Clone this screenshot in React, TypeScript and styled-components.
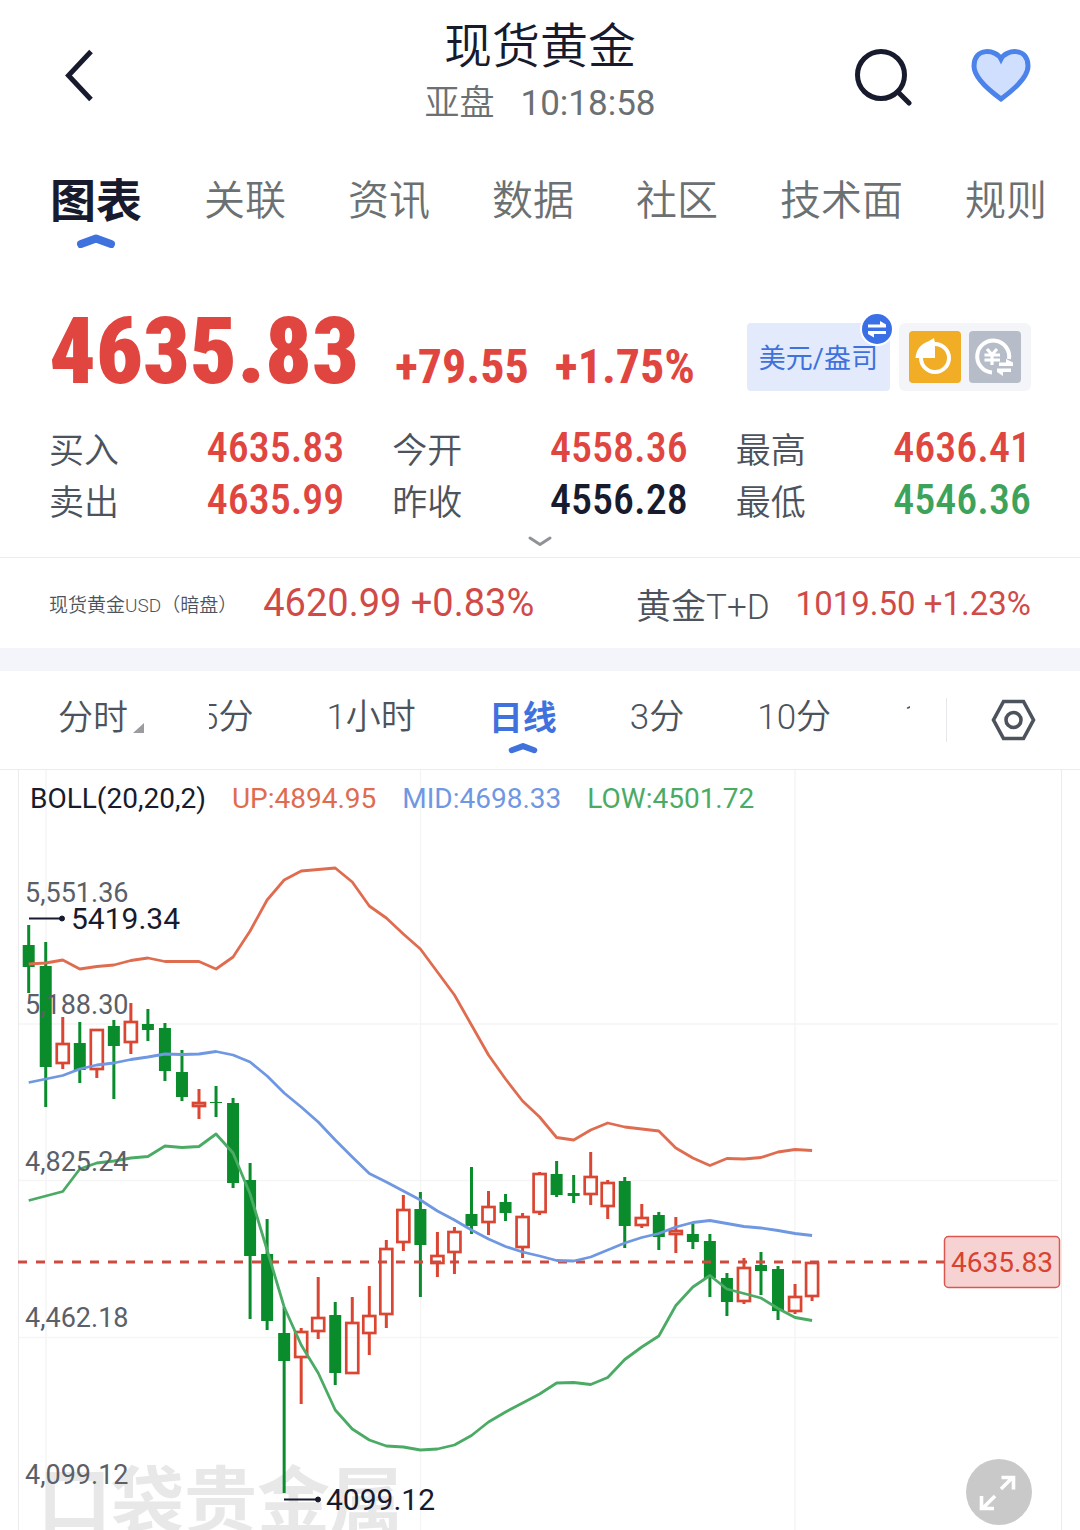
import React from "react";
import styled, { createGlobalStyle } from "styled-components";

const ink = "#171b2d";
const slate = "#4d535d";
const grey = "#6b7073";
const red = "#e0463f";
const green = "#3da35b";
const blue = "#3f72dd";

const uiFont = `Roboto, "Noto Sans CJK SC", sans-serif`;
const numFont = `"Roboto Condensed", Roboto, "Noto Sans CJK SC", sans-serif`;

const GlobalStyle = createGlobalStyle`
  * { box-sizing: border-box; }
  body { margin: 0; background: #fff; font-family: ${uiFont}; color: ${ink}; }
  button { border: 0; padding: 0; margin: 0; background: none; font: inherit; color: inherit; cursor: pointer; }
  dl, dd, dt, h1, p { margin: 0; font-weight: inherit; }
  svg { display: block; }
`;

const Page = styled.main`
  background: #fff;
  overflow: hidden;
`;

const Header = styled.header`
  display: grid;
  grid-template-columns: 1fr auto 1fr;
  padding: 15px 48px 22px;
`;

const HeaderSide = styled.div<{ $end?: boolean }>`
  display: flex;
  align-items: center;
  justify-content: ${(p) => (p.$end ? "flex-end" : "flex-start")};
  gap: 56px;
  padding-top: 8px;
`;

const IconButton = styled.button`
  display: flex;
  align-items: center;
  justify-content: center;
`;

const TitleBlock = styled.div`
  text-align: center;
`;

const Title = styled.h1`
  font-size: 48px;
  line-height: 64px;
  font-weight: 350;
`;

const Session = styled.p`
  display: flex;
  justify-content: center;
  gap: 26px;
  font-size: 35px;
  line-height: 50px;
  font-weight: 350;
  color: ${grey};
  time { font-weight: 400; }
`;

const Tabs = styled.nav`
  display: flex;
  gap: 62px;
  padding: 18px 0 0 50px;
`;

const Tab = styled.button<{ $active?: boolean }>`
  display: flex;
  flex-direction: column;
  align-items: center;
  flex: none;
  height: 85px;
  font-size: ${(p) => (p.$active ? 46 : 41)}px;
  line-height: 64px;
  font-weight: ${(p) => (p.$active ? 700 : 350)};
  color: ${(p) => (p.$active ? ink : grey)};
`;

const Quote = styled.section`
  padding: 53px 49px 0;
`;

const PriceRow = styled.div`
  display: flex;
  align-items: center;
  color: ${red};
  font-family: ${numFont};
  font-weight: 700;
`;

const Figures = styled.div`
  display: flex;
  align-items: baseline;
  flex: 1;
  padding-bottom: 10px;
`;

const LastPrice = styled.strong`
  font-size: 92px;
  line-height: 90px;
  width: 346px;
`;

const Change = styled.span`
  font-size: 48px;
  line-height: 60px;
  margin-right: 26px;
`;

const UnitButton = styled.button`
  position: relative;
  height: 68px;
  padding: 4px 12px 0;
  border-radius: 4px;
  background: #e3eafb;
  color: ${blue};
  font: 400 27px/64px ${uiFont};
  margin-right: 9px;
`;

const SwapBadge = styled.span`
  position: absolute;
  top: -11px;
  right: -4px;
  border: 2px solid #fff;
  border-radius: 50%;
`;

const ToolGroup = styled.div`
  display: flex;
  gap: 8px;
  padding: 8px 10px;
  border-radius: 6px;
  background: #f4f5f8;
`;

const Stats = styled.dl`
  display: grid;
  grid-template-columns: repeat(3, 1fr);
  column-gap: 48px;
  padding-top: 17px;
`;

const Stat = styled.div`
  display: flex;
  justify-content: space-between;
  align-items: center;
  height: 52px;
`;

const StatLabel = styled.dt`
  padding-top: 3px;
  font-size: 35px;
  line-height: 48px;
  font-weight: 350;
  color: ${slate};
`;

const StatValue = styled.dd<{ $color: string }>`
  padding-bottom: 4px;
  font: 500 42px/48px ${numFont};
  color: ${(p) => p.$color};
`;

const MoreButton = styled.button`
  display: flex;
  margin: 0 auto;
  padding: 8px 12px 10px;
`;

const Related = styled.section`
  display: flex;
  justify-content: space-between;
  align-items: center;
  padding: 0 49px;
  height: 91px;
  border-top: 1px solid #ececee;
  color: ${slate};
  font-weight: 350;
`;

const RelatedItem = styled.a`
  display: flex;
  align-items: center;
  color: inherit;
  text-decoration: none;
  gap: 26px;
`;

const RelatedName = styled.span<{ $small?: boolean }>`
  font-size: ${(p) => (p.$small ? 19 : 35)}px;
`;

const RelatedValue = styled.span<{ $small?: boolean }>`
  font-size: ${(p) => (p.$small ? 33 : 38)}px;
  font-weight: 400;
  color: #d04b47;
`;

const Band = styled.div`
  height: 23px;
  background: #f3f5fa;
`;

const PeriodBar = styled.nav`
  display: flex;
  align-items: center;
  height: 98px;
  padding: 0 44px 0 58px;
  font-size: 35px;
  line-height: 48px;
  font-weight: 350;
  color: ${slate};
`;

const PeriodMenu = styled.button`
  display: flex;
  align-items: flex-end;
  gap: 5px;
  width: 151px;
  flex: none;
  padding-bottom: 3px;
  svg { margin-bottom: 10px; }
`;

const PeriodScroller = styled.div`
  flex: 1;
  overflow: hidden;
`;

const PeriodTrack = styled.div`
  display: flex;
  gap: 73px;
  margin-left: -10px;
`;

const Period = styled.button<{ $active?: boolean }>`
  display: flex;
  flex-direction: column;
  align-items: center;
  flex: none;
  height: 76px;
  padding-top: 12px;
  font-size: ${(p) => (p.$active ? 34 : 35)}px;
  font-weight: ${(p) => (p.$active ? 700 : 350)};
  color: ${(p) => (p.$active ? blue : slate)};
`;

const SettingsButton = styled(IconButton)`
  height: 44px;
  margin-left: 36px;
  padding-left: 44px;
  border-left: 1px solid #e6e7ea;
`;

const ChartPanel = styled.section`
  position: relative;
  border-top: 1px solid #ececee;
`;

const Legend = styled.div`
  position: absolute;
  top: 9px;
  left: 30px;
  display: flex;
  gap: 26px;
  font-size: 28px;
  line-height: 40px;
`;

const LegendItem = styled.span<{ $color: string }>`
  color: ${(p) => p.$color};
`;

const ExpandButton = styled.button`
  position: absolute;
  right: 48px;
  bottom: 5px;
`;

const ChartSvg = styled.svg`
  width: 100%;
  height: auto;
  font-family: ${uiFont};
`;

const ActiveMark = ({ width }: { width: number }) => (
  <svg width={width} height={width * 0.4} viewBox="0 0 40 16" aria-hidden="true">
    <path d="M5 11 20 5.5 35 11" fill="none" stroke={blue} strokeWidth="8" strokeLinecap="round" strokeLinejoin="round" />
  </svg>
);

/* open/close band, wick extent, and direction, one entry per trading day */
type Candle = [number, number, number, number, "u" | "d"];
const candles: Candle[] = [
  [945, 967, 925, 993, "d"], [966, 1067, 942, 1107, "d"], [1043, 1064, 1017, 1069, "u"],
  [1043, 1070, 1022, 1083, "d"], [1029, 1070, 1029, 1078, "u"], [1026, 1046, 1020, 1099, "d"],
  [1021, 1043, 1003, 1054, "u"], [1024, 1030, 1009, 1041, "d"], [1028, 1071, 1023, 1081, "d"],
  [1072, 1097, 1050, 1101, "d"], [1102, 1107, 1089, 1119, "u"], [1102, 1103, 1086, 1117, "d"],
  [1103, 1183, 1098, 1188, "d"], [1180, 1256, 1163, 1319, "d"], [1254, 1321, 1219, 1330, "d"],
  [1333, 1361, 1307, 1493, "d"], [1331, 1358, 1328, 1404, "u"], [1317, 1332, 1277, 1339, "u"],
  [1315, 1373, 1302, 1385, "d"], [1322, 1374, 1297, 1374, "u"], [1315, 1334, 1286, 1355, "u"],
  [1248, 1315, 1240, 1328, "u"], [1209, 1243, 1195, 1251, "u"], [1209, 1245, 1192, 1297, "d"],
  [1255, 1264, 1232, 1277, "u"], [1231, 1253, 1227, 1274, "u"], [1214, 1226, 1167, 1234, "d"],
  [1206, 1223, 1191, 1235, "u"], [1202, 1213, 1194, 1221, "d"], [1216, 1248, 1213, 1258, "u"],
  [1173, 1213, 1172, 1215, "u"], [1174, 1195, 1161, 1197, "d"], [1193, 1196, 1175, 1203, "d"],
  [1176, 1195, 1152, 1205, "u"], [1182, 1207, 1180, 1219, "u"], [1181, 1226, 1177, 1248, "d"],
  [1217, 1226, 1204, 1228, "u"], [1215, 1237, 1212, 1250, "d"], [1230, 1235, 1217, 1253, "u"],
  [1234, 1242, 1224, 1249, "d"], [1241, 1278, 1234, 1297, "d"], [1278, 1302, 1273, 1316, "d"],
  [1267, 1302, 1258, 1304, "u"], [1265, 1271, 1252, 1295, "d"], [1269, 1311, 1266, 1320, "d"],
  [1296, 1312, 1284, 1314, "u"], [1262, 1297, 1262, 1301, "u"],
];

const upper = [964, 963, 960, 969, 966.5, 965, 960.5, 958, 961.5, 961.5, 961.5, 969, 957, 931, 900, 880, 871, 869.5, 868, 882, 906, 918, 934, 949, 972, 995, 1025, 1055, 1079, 1101, 1117, 1137.5, 1140, 1130, 1123, 1127, 1129, 1131, 1148, 1158, 1165.5, 1158.5, 1159, 1157.5, 1152, 1149.5, 1150.5];
const middle = [1082.5, 1079, 1075.5, 1069, 1065, 1063, 1059.5, 1057, 1054, 1054.5, 1054, 1051.5, 1055, 1062, 1076, 1093, 1107, 1122, 1140, 1157, 1173.5, 1182, 1191, 1200, 1211, 1220, 1230, 1239, 1246.5, 1252, 1256, 1260.5, 1261, 1257, 1250, 1243, 1237.5, 1233.5, 1227, 1222.5, 1220.5, 1223.5, 1226.5, 1228, 1230.5, 1233.5, 1235.5];
const lower = [1200.5, 1196, 1191.5, 1169, 1163, 1161, 1158, 1156.5, 1146, 1147.5, 1146.5, 1134, 1153, 1194, 1250, 1307, 1345, 1373, 1410, 1429, 1440, 1446, 1447, 1450, 1449, 1445, 1435.5, 1422, 1412, 1403, 1394, 1383, 1382.5, 1384.5, 1377.5, 1359.5, 1347, 1336, 1305.5, 1287, 1275.5, 1289, 1293.5, 1298, 1308.5, 1317.5, 1320.5];

const dayX = (i: number) => 28.7 + i * 17.03;
const toPoints = (ys: number[]) => ys.map((y, i) => `${dayX(i)},${y}`).join(" ");

const axisLabels: [string, number][] = [
  ["5,551.36", 902],
  ["5,188.30", 1014],
  ["4,825.24", 1171],
  ["4,462.18", 1327],
  ["4,099.12", 1484],
];

const CandleMark = ({ candle, x }: { candle: Candle; x: number }) => {
  const [top, bottom, high, low, dir] = candle;
  if (dir === "d") {
    return (
      <g fill="#0b8c2c">
        <rect x={x - 1.5} y={high} width="3" height={low - high} />
        <rect x={x - 6} y={top} width="12" height={bottom - top} />
      </g>
    );
  }
  return (
    <g stroke="#da4632" fill="none">
      <path d={`M${x} ${high}V${top}M${x} ${bottom}V${low}`} strokeWidth="3" />
      <rect x={x - 6} y={top + 1} width="12" height={Math.max(bottom - top - 2, 1)} strokeWidth="2.7" />
    </g>
  );
};

const Chart = () => (
  <ChartSvg viewBox="0 770 1080 760" role="img" aria-label="现货黄金 日线">
    <g stroke="#f5f5f6" strokeWidth="1.5">
      <path d="M19 1024H1058M19 1180.5H1058M19 1337.5H1058" />
      <path d="M46 770V1530M420.500 770V1530M795 770V1530" />
    </g>
    <path d="M18.500 770V1530M1061.500 770V1530" stroke="#ececee" />
    <text x="38" y="1527" fontSize="73" fontWeight="700" fill="#e8e8e8">口袋贵金属</text>
    {candles.map((c, i) => <CandleMark key={i} candle={c} x={dayX(i)} />)}
    <path d="M18 1262H944" stroke="#cc4a3f" strokeWidth="3" strokeDasharray="9 9" />
    <g fill="none" strokeWidth="2.8" strokeLinejoin="round">
      <polyline points={toPoints(upper)} stroke="#e06c50" />
      <polyline points={toPoints(middle)} stroke="#6f97e2" />
      <polyline points={toPoints(lower)} stroke="#4bab65" />
    </g>
    <g fill="#5b6068" fontSize="27">
      {axisLabels.map(([t, y]) => <text key={t} x="25" y={y}>{t}</text>)}
    </g>
    <g fill={ink} stroke={ink}>
      <path d="M29 918.500H62M284 1499.500H318" strokeWidth="2" />
      <circle cx="62" cy="918.500" r="2.500" />
      <circle cx="318" cy="1499.500" r="2.500" />
    </g>
    <g fill={ink} fontSize="30">
      <text x="71" y="929">5419.34</text>
      <text x="326" y="1510">4099.12</text>
    </g>
    <rect x="944.500" y="1236.500" width="115" height="51" rx="4" fill="#f6d2d3" stroke="#d9574f" strokeWidth="1.5" />
    <text x="1002" y="1272" fontSize="28" textAnchor="middle" fill="#d8432f">4635.83</text>
  </ChartSvg>
);

const tabs = ["图表", "关联", "资讯", "数据", "社区", "技术面", "规则"];
const periods = ["5分", "1小时", "日线", "3分", "10分", "15分"];
const stats: [string, string, string][] = [
  ["买入", "4635.83", red], ["今开", "4558.36", red], ["最高", "4636.41", red],
  ["卖出", "4635.99", red], ["昨收", "4556.28", ink], ["最低", "4546.36", green],
];

export default function App() {
  return (
    <Page>
      <GlobalStyle />
      <Header>
        <HeaderSide>
          <IconButton aria-label="返回">
            <svg width="64" height="64" viewBox="0 0 64 64">
              <path d="M43 7.500 20.500 31.500 43 55.500" fill="none" stroke={ink} strokeWidth="5" />
            </svg>
          </IconButton>
        </HeaderSide>
        <TitleBlock>
          <Title>现货黄金</Title>
          <Session><span>亚盘</span><time>10:18:58</time></Session>
        </TitleBlock>
        <HeaderSide $end>
          <IconButton aria-label="搜索">
            <svg width="60" height="60" viewBox="0 0 60 60" fill="none" stroke={ink} strokeWidth="5">
              <circle cx="29" cy="29" r="23.500" />
              <path d="M46 46 57 57" strokeLinecap="round" />
            </svg>
          </IconButton>
          <IconButton aria-label="收藏">
            <svg width="64" height="60" viewBox="0 0 64 60">
              <path d="M33 13C28 3 6 1 6 20 6 32 22 45 33 53 44 45 60 32 60 20 60 1 38 3 33 13Z" fill="#cfdffd" stroke="#4b83ea" strokeWidth="5" strokeLinejoin="miter" />
            </svg>
          </IconButton>
        </HeaderSide>
      </Header>

      <Tabs>
        {tabs.map((t, i) => (
          <Tab key={t} $active={i === 0}>
            {t}
            {i === 0 && <ActiveMark width={40} />}
          </Tab>
        ))}
      </Tabs>

      <Quote>
        <PriceRow>
          <Figures>
            <LastPrice>4635.83</LastPrice>
            <Change>+79.55</Change>
            <Change>+1.75%</Change>
          </Figures>
          <UnitButton>
            美元/盎司
            <SwapBadge>
              <svg width="30" height="30" viewBox="0 0 30 30">
                <circle cx="15" cy="15" r="15" fill="#3b6fe6" />
                <path d="M6 10.500H18V7L24 10.500V13.500H6ZM24 20H12V23.500L6 20V17H24Z" fill="#fff" />
              </svg>
            </SwapBadge>
          </UnitButton>
          <ToolGroup>
            <IconButton aria-label="复盘">
              <svg width="52" height="52" viewBox="0 0 52 52">
                <rect width="52" height="52" rx="4" fill="#f0ad25" />
                <circle cx="26" cy="27" r="14" fill="none" stroke="#fff" strokeWidth="4" />
                <path d="M26 12V27H6.500C7 20 11 13 19 10.500L25 7Z" fill="#fff" />
              </svg>
            </IconButton>
            <IconButton aria-label="换算">
              <svg width="52" height="52" viewBox="0 0 52 52" fill="none" stroke="#fff">
                <rect width="52" height="52" rx="4" fill="#b7bdc8" stroke="none" />
                <path d="M40 28A16 16 0 1 0 23 41.500" strokeWidth="4" />
                <path d="M18 18 23 23.500M28 18 23 23.500V34M15.500 24H31M15.500 29H31" strokeWidth="3.200" />
                <path d="M30 31.500H37V28L44 31.500V35H30ZM42 41H34V45L28 41V37.500H42Z" fill="#fff" stroke="none" />
              </svg>
            </IconButton>
          </ToolGroup>
        </PriceRow>
        <Stats>
          {stats.map(([label, value, color]) => (
            <Stat key={label}>
              <StatLabel>{label}</StatLabel>
              <StatValue $color={color}>{value}</StatValue>
            </Stat>
          ))}
        </Stats>
        <MoreButton aria-label="展开">
          <svg width="24" height="11" viewBox="0 0 24 11">
            <path d="M2 2 12 8.500 22 2" fill="none" stroke="#8f9296" strokeWidth="3" strokeLinecap="round" strokeLinejoin="round" />
          </svg>
        </MoreButton>
      </Quote>

      <Related>
        <RelatedItem href="#usd">
          <RelatedName $small>现货黄金USD（暗盘）</RelatedName>
          <RelatedValue>4620.99 +0.83%</RelatedValue>
        </RelatedItem>
        <RelatedItem href="#td">
          <RelatedName>黄金T+D</RelatedName>
          <RelatedValue $small>1019.50 +1.23%</RelatedValue>
        </RelatedItem>
      </Related>
      <Band />

      <PeriodBar>
        <PeriodMenu>
          分时
          <svg width="11" height="10" viewBox="0 0 11 10"><path d="M11 0V10H0Z" fill="#9a9c9f" /></svg>
        </PeriodMenu>
        <PeriodScroller>
          <PeriodTrack>
            {periods.map((p) => (
              <Period key={p} $active={p === "日线"}>
                {p}
                {p === "日线" && <ActiveMark width={30} />}
              </Period>
            ))}
          </PeriodTrack>
        </PeriodScroller>
        <SettingsButton aria-label="图表设置">
          <svg width="45" height="42" viewBox="0 0 45 42" fill="none" stroke={slate} strokeWidth="3.600">
            <path d="M12.500 2.500H32.500L42.500 21 32.500 39.500H12.500L2.500 21Z" />
            <circle cx="22.500" cy="21" r="7.500" />
          </svg>
        </SettingsButton>
      </PeriodBar>

      <ChartPanel>
        <Chart />
        <Legend>
          <LegendItem $color={ink}>BOLL(20,20,2)</LegendItem>
          <LegendItem $color="#e06c50">UP:4894.95</LegendItem>
          <LegendItem $color="#6f97e2">MID:4698.33</LegendItem>
          <LegendItem $color="#4bab65">LOW:4501.72</LegendItem>
        </Legend>
        <ExpandButton aria-label="全屏">
          <svg width="66" height="66" viewBox="0 0 66 66">
            <circle cx="33" cy="33" r="33" fill="#c9c9c9" />
            <path d="M35 30 47 18M35.500 18.500H47.500V30.500M29 37 16 50M15.500 37V49.500H28" fill="none" stroke="#fff" strokeWidth="3.600" />
          </svg>
        </ExpandButton>
      </ChartPanel>
    </Page>
  );
}
